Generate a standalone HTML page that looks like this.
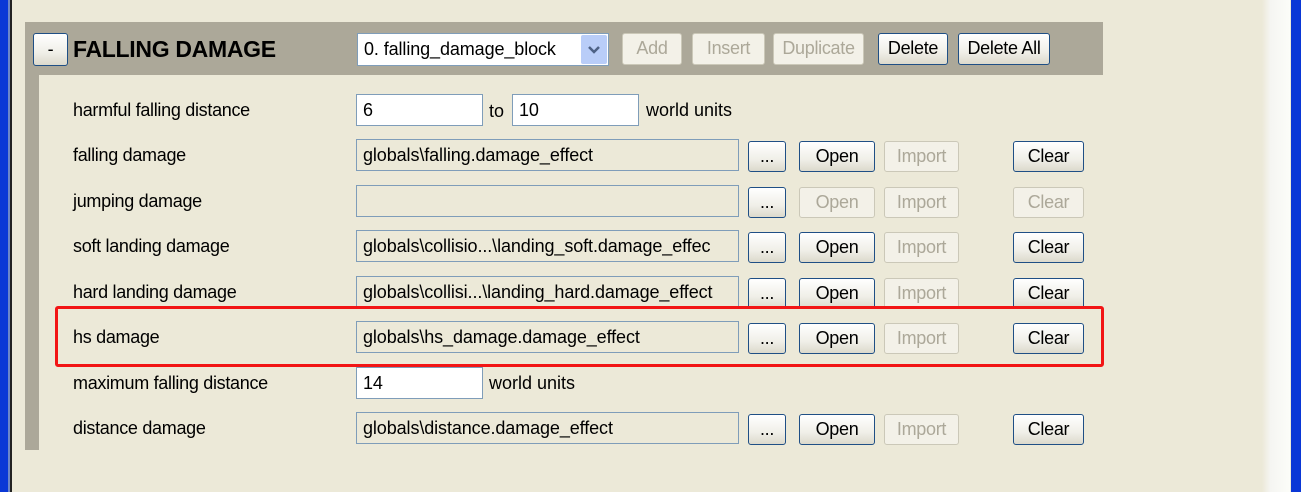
<!DOCTYPE html>
<html><head><meta charset="utf-8"><style>
*{box-sizing:border-box;margin:0;padding:0}
body{width:1301px;height:492px;background:#ece9d8;position:relative;overflow:hidden;font-family:"Liberation Sans",sans-serif;font-size:18px;color:#000}
.a{position:absolute}
.lbl{position:absolute;left:73px;line-height:20px;letter-spacing:-0.3px}
.in{position:absolute;border:1px solid #7f9db9;background:#ece9d8;height:32px;line-height:30px;padding-left:6px;white-space:nowrap;overflow:hidden;letter-spacing:-0.1px}
.w{background:#fff}
.b{position:absolute;height:31px;border:1.5px solid #1f4f85;border-radius:3px;background:linear-gradient(#fff,#f0efe8 60%,#dcd9cc);text-align:center;line-height:28px;letter-spacing:-0.3px}
.d{border:1px solid #cbc8b8;color:#aca899;background:#f3f1e8}
</style></head><body>
<div class="a" style="left:0;top:0;width:8px;height:492px;background:#0a37d6"></div>
<div class="a" style="left:8px;top:0;width:2px;height:492px;background:#6d86c9"></div>
<div class="a" style="left:10px;top:0;width:2px;height:492px;background:#222"></div>
<div class="a" style="left:1262px;top:0;width:28px;height:492px;background:linear-gradient(90deg,#ece9d8,#f5f5f2 30%,#fcfdf9)"></div>
<div class="a" style="left:1291px;top:0;width:10px;height:492px;background:#0a37d6"></div>

<div class="a" style="left:25px;top:22px;width:1078px;height:53px;background:#aca899"></div>
<div class="a" style="left:25px;top:75px;width:14px;height:375px;background:#aca899"></div>

<div class="b" style="left:33px;top:33px;width:35px;height:33px;line-height:30px">-</div>
<div class="a" style="left:73px;top:36px;font-weight:bold;font-size:23px;letter-spacing:-0.3px">FALLING DAMAGE</div>
<div class="in w" style="left:357px;top:33px;width:252px;height:33px">0. falling_damage_block</div>
<div class="a" style="left:581px;top:35px;width:26px;height:29px;background:#b9cdf8;border-radius:2px"><svg width="26" height="29"><path d="M8 12 L13 17 L18 12" stroke="#4d6185" stroke-width="2.5" fill="none"/></svg></div>
<div class="b d" style="left:622px;top:33px;width:60px;height:32px">Add</div>
<div class="b d" style="left:692px;top:33px;width:73px;height:32px">Insert</div>
<div class="b d" style="left:773px;top:33px;width:91px;height:32px">Duplicate</div>
<div class="b" style="left:878px;top:33px;width:70px;height:32px">Delete</div>
<div class="b" style="left:958px;top:33px;width:92px;height:32px">Delete All</div>

<div class="lbl" style="top:100px">harmful falling distance</div>
<div class="in w" style="left:356px;top:94px;width:127px">6</div>
<div class="a" style="left:489px;top:101px">to</div>
<div class="in w" style="left:512px;top:94px;width:127px">10</div>
<div class="a" style="left:646px;top:100px">world units</div>

<div class="lbl" style="top:145px">falling damage</div>
<div class="in" style="left:356px;top:139px;width:383px">globals\falling.damage_effect</div>
<div class="b" style="left:748px;top:141px;width:38px">...</div>
<div class="b" style="left:799px;top:141px;width:76px">Open</div>
<div class="b d" style="left:884px;top:141px;width:75px">Import</div>
<div class="b" style="left:1013px;top:141px;width:71px">Clear</div>

<div class="lbl" style="top:191px">jumping damage</div>
<div class="in" style="left:356px;top:185px;width:383px"></div>
<div class="b" style="left:748px;top:187px;width:38px">...</div>
<div class="b d" style="left:799px;top:187px;width:76px">Open</div>
<div class="b d" style="left:884px;top:187px;width:75px">Import</div>
<div class="b d" style="left:1013px;top:187px;width:71px">Clear</div>

<div class="lbl" style="top:236px">soft landing damage</div>
<div class="in" style="left:356px;top:230px;width:383px">globals\collisio...\landing_soft.damage_effec</div>
<div class="b" style="left:748px;top:232px;width:38px">...</div>
<div class="b" style="left:799px;top:232px;width:76px">Open</div>
<div class="b d" style="left:884px;top:232px;width:75px">Import</div>
<div class="b" style="left:1013px;top:232px;width:71px">Clear</div>

<div class="lbl" style="top:282px">hard landing damage</div>
<div class="in" style="left:356px;top:276px;width:383px">globals\collisi...\landing_hard.damage_effect</div>
<div class="b" style="left:748px;top:278px;width:38px">...</div>
<div class="b" style="left:799px;top:278px;width:76px">Open</div>
<div class="b d" style="left:884px;top:278px;width:75px">Import</div>
<div class="b" style="left:1013px;top:278px;width:71px">Clear</div>

<div class="lbl" style="top:327px">hs damage</div>
<div class="in" style="left:356px;top:321px;width:383px">globals\hs_damage.damage_effect</div>
<div class="b" style="left:748px;top:323px;width:38px">...</div>
<div class="b" style="left:799px;top:323px;width:76px">Open</div>
<div class="b d" style="left:884px;top:323px;width:75px">Import</div>
<div class="b" style="left:1013px;top:323px;width:71px">Clear</div>

<div class="lbl" style="top:373px">maximum falling distance</div>
<div class="in w" style="left:356px;top:367px;width:127px">14</div>
<div class="a" style="left:489px;top:373px">world units</div>

<div class="lbl" style="top:418px">distance damage</div>
<div class="in" style="left:356px;top:412px;width:383px">globals\distance.damage_effect</div>
<div class="b" style="left:748px;top:414px;width:38px">...</div>
<div class="b" style="left:799px;top:414px;width:76px">Open</div>
<div class="b d" style="left:884px;top:414px;width:75px">Import</div>
<div class="b" style="left:1013px;top:414px;width:71px">Clear</div>

<div class="a" style="left:55px;top:306px;width:1049px;height:61px;border:3px solid #f21515;border-radius:3px"></div>
</body></html>
